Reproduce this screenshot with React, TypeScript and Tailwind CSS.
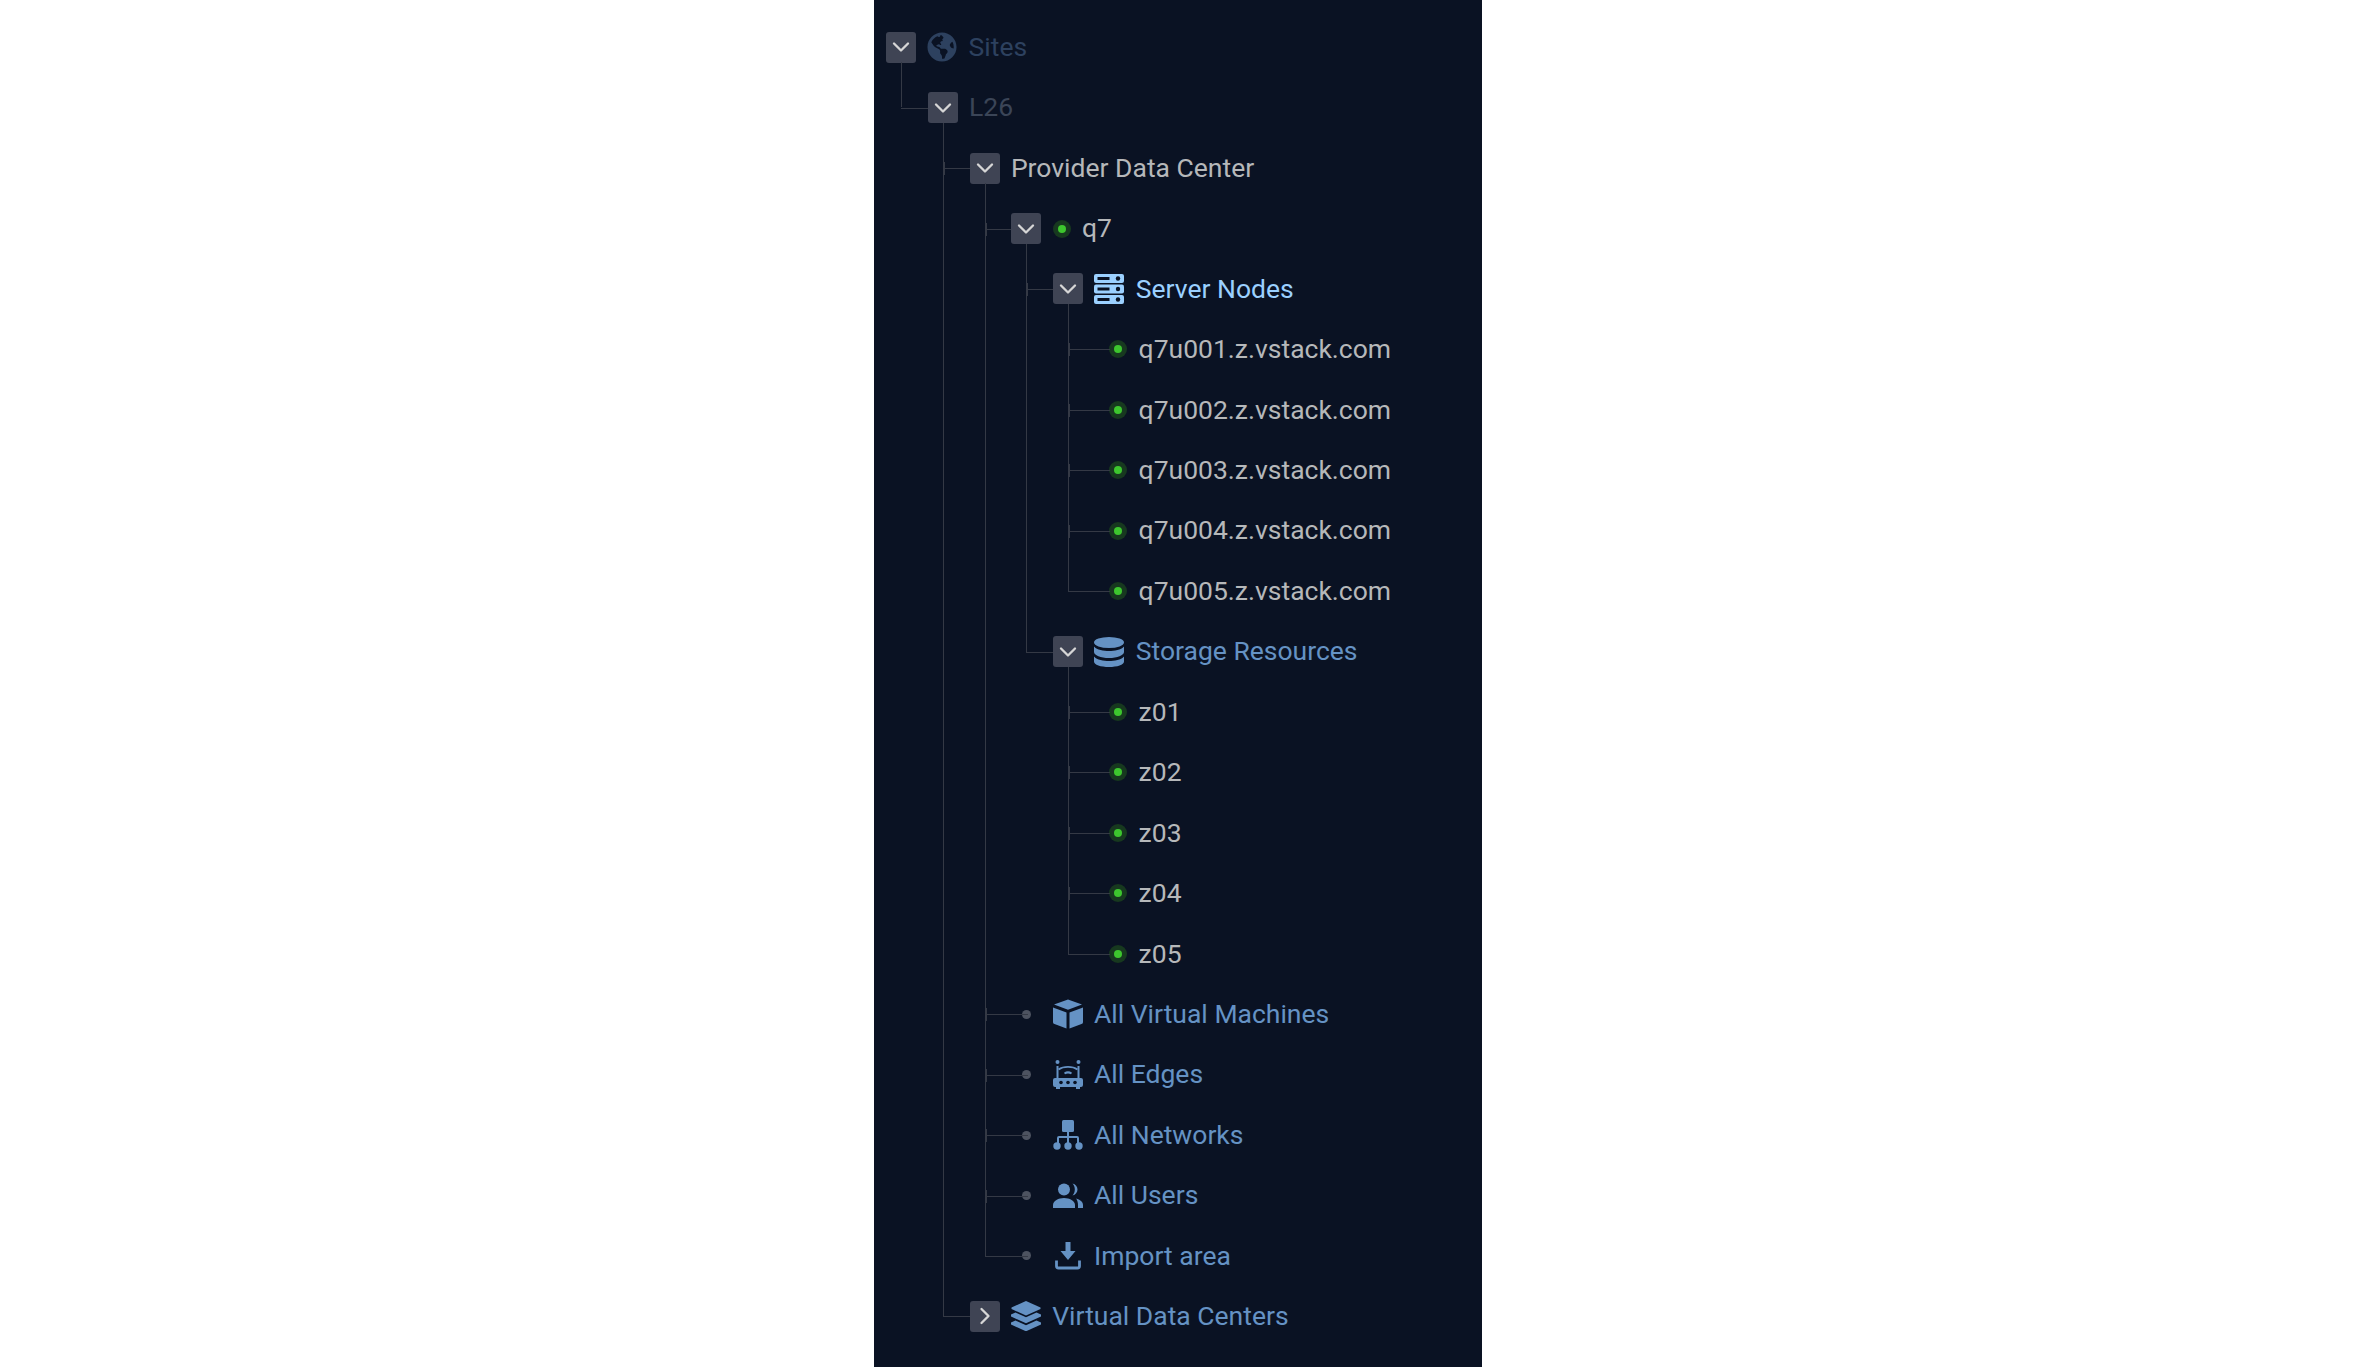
import { FaGlobeAmericas } from 'react-icons/fa';
import { ChevronDown, ChevronRight } from 'lucide-react';
import type { ReactNode } from 'react';

const ROW_H = 60.45;
const STEP = 41.8;
const BASE = 12;
const PANEL = '#0a1223';

type Node = {
  label: string;
  tone: string;
  icon?: ReactNode;
  status?: boolean;
  leafDot?: boolean;
  open?: boolean;
  children?: Node[];
};

const blue = 'text-[#6592c4]';
const grey = 'text-[#b6b8ba]';

function Svg({ children }: { children: ReactNode }) {
  return (
    <svg viewBox="0 0 30 30" className="h-[30px] w-[30px]" fill="currentColor">
      {children}
    </svg>
  );
}

function ServerIcon() {
  return (
    <Svg>
      {[0, 10.5, 21].map((y) => (
        <g key={y}>
          <rect x="0" y={y} width="30" height="9" rx="2" />
          <rect x="3.5" y={y + 3} width="12" height="3" fill={PANEL} />
          <circle cx="24" cy={y + 4.5} r="2.2" fill={PANEL} />
        </g>
      ))}
    </Svg>
  );
}

function DatabaseIcon() {
  return (
    <Svg>
      <ellipse cx="15" cy="5.5" rx="15" ry="5.5" />
      <path d="M0 9.5c3 3.4 9.5 4.5 15 4.5s12-1.100 15-4.500V15c0 3.300-6.700 6-15 6S0 18.300 0 15z" />
      <path d="M0 19.500c3 3.400 9.500 4.500 15 4.500s12-1.100 15-4.500V24.500c0 3.300-6.700 5.500-15 5.500S0 27.800 0 24.500z" />
    </Svg>
  );
}

function CubeIcon() {
  return (
    <Svg>
      <path d="M15 0.500 29 5.500 15 10.800 1 5.500z" />
      <path d="M0 8.500 13.500 13.500V29.500L1.500 25a2 2 0 0 1-1.500-2z" />
      <path d="M30 8.500 16.500 13.500V29.500L28.500 25a2 2 0 0 0 1.500-2z" />
    </Svg>
  );
}

function RouterIcon() {
  return (
    <Svg>
      <path d="M2 18h26a2 2 0 0 1 2 2v5a2 2 0 0 1-2 2h-1v2h-4v-2H7v2H3v-2H2a2 2 0 0 1-2-2v-5a2 2 0 0 1 2-2z" />
      <circle cx="8" cy="22.500" r="1.800" fill={PANEL} />
      <circle cx="15" cy="22.500" r="1.800" fill={PANEL} />
      <circle cx="22" cy="22.500" r="1.800" fill={PANEL} />
      <circle cx="4.500" cy="2" r="2" />
      <circle cx="25.500" cy="2" r="2" />
      <rect x="3.500" y="6" width="2" height="12" />
      <rect x="24.500" y="6" width="2" height="12" />
      <path d="M5.500 9.500c5-3.500 14-3.500 19 0" fill="none" stroke="currentColor" strokeWidth="1.800" />
      <path d="M11.500 13.500c2.200-1.400 4.800-1.400 7 0" fill="none" stroke="currentColor" strokeWidth="2" />
    </Svg>
  );
}

function SitemapIcon() {
  return (
    <Svg>
      <rect x="9" y="0" width="12" height="12" rx="1.500" />
      <rect x="14" y="12" width="2" height="5" />
      <path d="M5 23v-5a1 1 0 0 1 1-1h18a1 1 0 0 1 1 1v5" fill="none" stroke="currentColor" strokeWidth="2" />
      <rect x="14" y="16" width="2" height="7" />
      <circle cx="4" cy="26" r="3.700" />
      <circle cx="15" cy="26" r="3.700" />
      <circle cx="26" cy="26" r="3.700" />
    </Svg>
  );
}

function UsersIcon() {
  return (
    <Svg>
      <circle cx="11" cy="8.500" r="6" />
      <path d="M0 27v-3C0 19.800 5.500 17 11 17s11 2.800 11 7v3z" />
      <path d="M19.500 2.500c3 .6 5 3.100 5 6s-2 5.400-5 6c1.500-1.600 2.300-3.700 2.300-6s-.8-4.400-2.300-6z" />
      <path d="M25 27h5v-3c0-3.300-3-5.500-7-6.500 1.300 1.700 2 3.900 2 6.500z" />
    </Svg>
  );
}

function ImportIcon() {
  return (
    <Svg>
      <path d="M12.500 1h5v9h5L15 19 7.500 10h5z" />
      <path d="M3.500 19.500V25a2 2 0 0 0 2 2h19a2 2 0 0 0 2-2v-5.500" fill="none" stroke="currentColor" strokeWidth="2.800" />
    </Svg>
  );
}

function LayersIcon() {
  return (
    <Svg>
      <path d="M15 0 29.500 6.500V8L15 14.500 0.500 8V6.500z" />
      <path d="M4.500 11.500 15 16.300 25.500 11.500 30 13.500V15.500L15 22.300 0 15.500V13.500z" />
      <path d="M4.500 19.500 15 24.300 25.500 19.500 30 21.500V23.500L15 30.300 0 23.500V21.500z" />
    </Svg>
  );
}

const vmRow = (label: string, icon: ReactNode): Node => ({ label, tone: blue, icon, leafDot: true });
const hosts = ['q7u001', 'q7u002', 'q7u003', 'q7u004', 'q7u005'].map((h) => ({ label: `${h}.z.vstack.com`, tone: grey, status: true }));
const zones = ['z01', 'z02', 'z03', 'z04', 'z05'].map((z) => ({ label: z, tone: grey, status: true }));

const tree: Node = {
  label: 'Sites',
  tone: 'text-[#2d415f]',
  icon: <FaGlobeAmericas size={30} />,
  open: true,
  children: [
    {
      label: 'L26',
      tone: 'text-[#3b4557]',
      open: true,
      children: [
        {
          label: 'Provider Data Center',
          tone: grey,
          open: true,
          children: [
            {
              label: 'q7',
              tone: grey,
              status: true,
              open: true,
              children: [
                { label: 'Server Nodes', tone: 'text-[#9bd0ff]', icon: <ServerIcon />, open: true, children: hosts },
                { label: 'Storage Resources', tone: blue, icon: <DatabaseIcon />, open: true, children: zones },
              ],
            },
            vmRow('All Virtual Machines', <CubeIcon />),
            vmRow('All Edges', <RouterIcon />),
            vmRow('All Networks', <SitemapIcon />),
            vmRow('All Users', <UsersIcon />),
            vmRow('Import area', <ImportIcon />),
          ],
        },
        { label: 'Virtual Data Centers', tone: blue, icon: <LayersIcon />, open: false, children: [] },
      ],
    },
  ],
};

function countRows(n: Node): number {
  if (!n.open || !n.children) return 1;
  return n.children.reduce((sum, c) => sum + countRows(c), 1);
}

function Toggle({ open }: { open: boolean }) {
  return (
    <span className="flex h-[31px] w-[30px] shrink-0 items-center justify-center rounded-[3px] bg-[#3f4454] text-[#d6d6d6]">
      {open ? <ChevronDown size={28} strokeWidth={2} /> : <ChevronRight size={28} strokeWidth={2} />}
    </span>
  );
}

function Row({ node, level }: { node: Node; level: number }) {
  const hasToggle = !!node.children;
  const isHostLeaf = !hasToggle && node.status;
  return (
    <div className="flex h-[60.45px] items-center gap-[11.3px]" style={{ paddingLeft: BASE + level * STEP }}>
      {hasToggle && <Toggle open={!!node.open} />}
      {isHostLeaf && <span className="w-[3px] shrink-0" />}
      {node.leafDot && (
        <span className="flex h-[30px] w-[30px] shrink-0 items-center justify-center">
          <span className="h-[9px] w-[9px] rounded-full bg-[#4d5360]" />
        </span>
      )}
      {node.status && (
        <span className="flex h-[18px] w-[18px] shrink-0 items-center justify-center rounded-full bg-[#17391f]">
          <span className="h-2 w-2 rounded-full bg-[#3dc62e]" />
        </span>
      )}
      {node.icon && (
        <span className={`flex h-[30px] w-[30px] shrink-0 items-center justify-center ${node.tone}`}>{node.icon}</span>
      )}
      <span className={`text-[26.5px] leading-none whitespace-nowrap ${node.tone}`}>{node.label}</span>
    </div>
  );
}

function Branch({ node, level, last, root }: { node: Node; level: number; last?: boolean; root?: boolean }) {
  const isHostLeaf = !node.children && node.status;
  const stubLeft = BASE + (level - 1) * STEP + 15;
  const stubWidth = node.leafDot ? STEP + 2 : isHostLeaf ? STEP : STEP - 15;
  const kids = node.open && node.children ? node.children : [];
  const lastRows = kids.length ? countRows(kids[kids.length - 1]) : 0;
  return (
    <div className="relative">
      {!root && (
        <span className="absolute h-px bg-[#343945]" style={{ left: stubLeft, top: ROW_H / 2, width: stubWidth }} />
      )}
      {!root && !last && (
        <span className="absolute h-[13px] w-[2px] bg-[#343945]" style={{ left: stubLeft, top: ROW_H / 2 - 6 }} />
      )}
      <Row node={node} level={level} />
      {kids.length > 0 && (
        <div className="relative">
          <span
            className="absolute w-px bg-[#343945]"
            style={{ left: BASE + level * STEP + 15, top: -15, bottom: (lastRows - 1) * ROW_H + ROW_H / 2 }}
          />
          {kids.map((k, i) => (
            <Branch key={k.label} node={k} level={level + 1} last={i === kids.length - 1} />
          ))}
        </div>
      )}
    </div>
  );
}

export default function App() {
  return (
    <div className="flex h-[1367px] w-full justify-center bg-white font-['Roboto',sans-serif]">
      <div className="h-full w-[608px] overflow-hidden bg-[#0a1223] pt-[17px]">
        <Branch node={tree} level={0} root />
      </div>
    </div>
  );
}
